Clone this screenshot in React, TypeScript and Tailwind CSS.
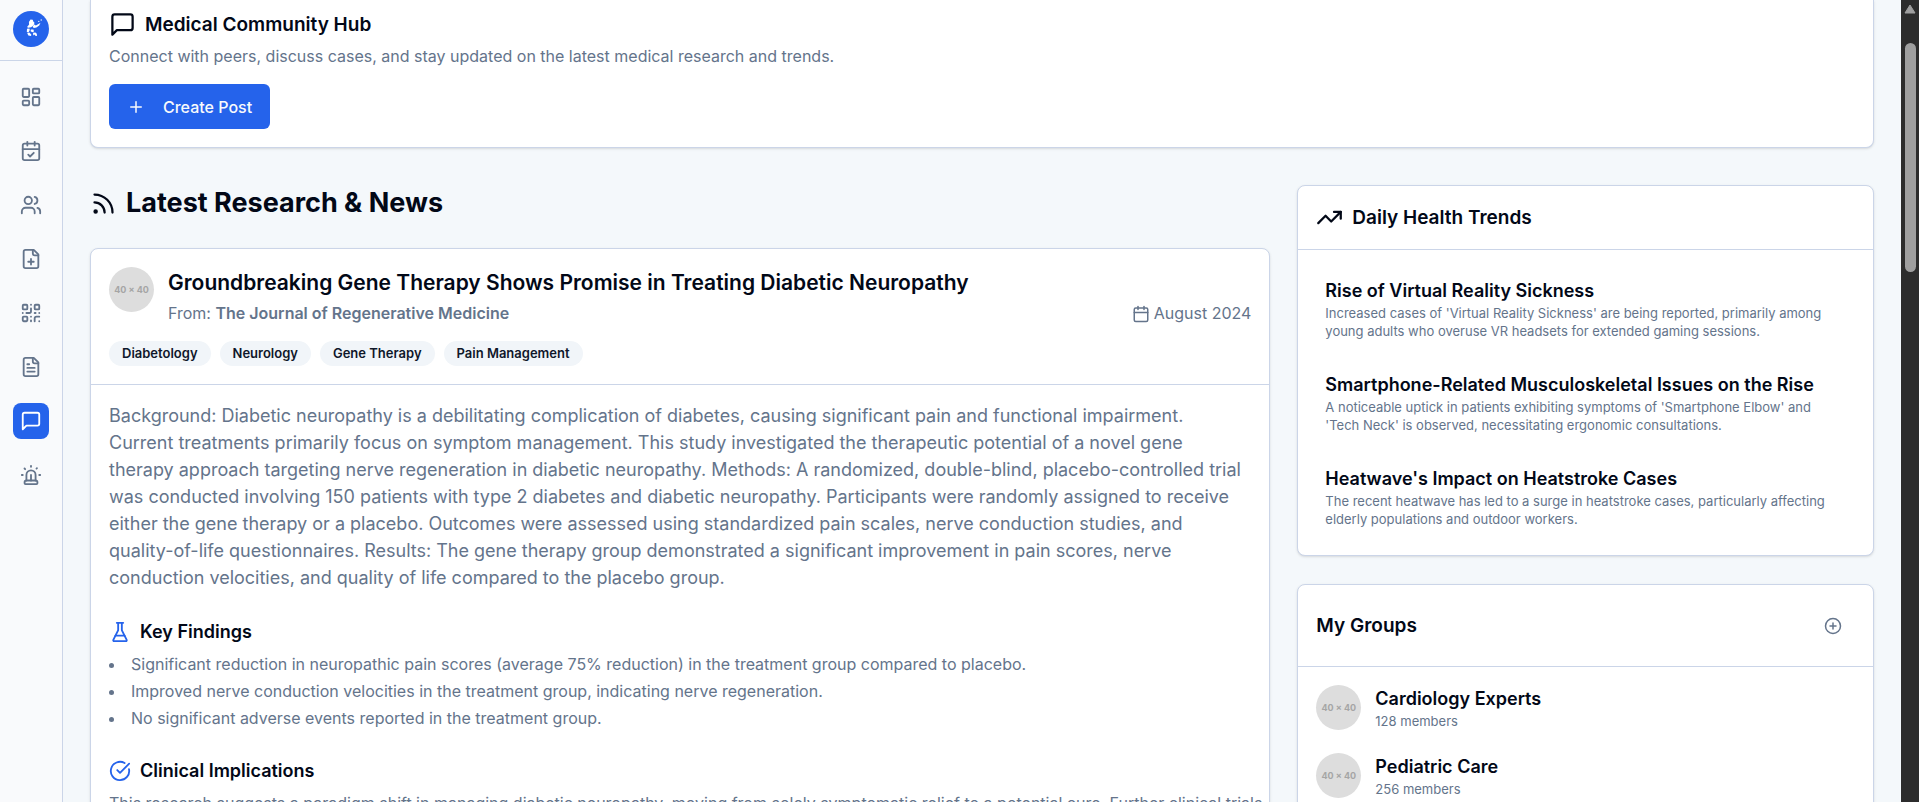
import type { ReactNode } from "react";
import {
  CalendarCheck,
  Calendar,
  CircleCheckBig,
  CirclePlus,
  LayoutDashboard,
  Plus,
  QrCode,
  Rss,
  Siren,
  TrendingUp,
  Users,
} from "lucide-react";

type IconProps = { className?: string };

function StrokeIcon({ className, children }: IconProps & { children: ReactNode }) {
  return (
    <svg
      viewBox="0 0 24 24"
      fill="none"
      stroke="currentColor"
      strokeWidth="2"
      strokeLinecap="round"
      strokeLinejoin="round"
      className={className}
      aria-hidden="true"
    >
      {children}
    </svg>
  );
}

function MessageIcon({ className }: IconProps) {
  return (
    <StrokeIcon className={className}>
      <path d="M21 15a2 2 0 0 1-2 2H7l-4 4V5a2 2 0 0 1 2-2h14a2 2 0 0 1 2 2z" />
    </StrokeIcon>
  );
}

function FilePlusIcon({ className }: IconProps) {
  return (
    <StrokeIcon className={className}>
      <path d="M15 2H6a2 2 0 0 0-2 2v16a2 2 0 0 0 2 2h12a2 2 0 0 0 2-2V7Z" />
      <path d="M14 2v4a2 2 0 0 0 2 2h4" />
      <path d="M9 15h6" />
      <path d="M12 18v-6" />
    </StrokeIcon>
  );
}

function FileTextIcon({ className }: IconProps) {
  return (
    <StrokeIcon className={className}>
      <path d="M15 2H6a2 2 0 0 0-2 2v16a2 2 0 0 0 2 2h12a2 2 0 0 0 2-2V7Z" />
      <path d="M14 2v4a2 2 0 0 0 2 2h4" />
      <path d="M10 9H8" />
      <path d="M16 13H8" />
      <path d="M16 17H8" />
    </StrokeIcon>
  );
}

function FlaskIcon({ className }: IconProps) {
  return (
    <StrokeIcon className={className}>
      <path d="M10 2v7.527a2 2 0 0 1-.211.896L4.720 20.550a1 1 0 0 0 .9 1.450h12.760a1 1 0 0 0 .9-1.450l-5.069-10.127A2 2 0 0 1 14 9.527V2" />
      <path d="M8.500 2h7" />
      <path d="M7 16h10" />
    </StrokeIcon>
  );
}

const navItems = [
  { label: "Dashboard", icon: LayoutDashboard },
  { label: "Appointments", icon: CalendarCheck },
  { label: "Patients", icon: Users },
  { label: "New record", icon: FilePlusIcon },
  { label: "Scan code", icon: QrCode },
  { label: "Reports", icon: FileTextIcon },
  { label: "Community", icon: MessageIcon, active: true },
  { label: "Emergency", icon: Siren },
];

const tags = ["Diabetology", "Neurology", "Gene Therapy", "Pain Management"];

const findings = [
  "Significant reduction in neuropathic pain scores (average 75% reduction) in the treatment group compared to placebo.",
  "Improved nerve conduction velocities in the treatment group, indicating nerve regeneration.",
  "No significant adverse events reported in the treatment group.",
];

const trends = [
  {
    title: "Rise of Virtual Reality Sickness",
    text: "Increased cases of 'Virtual Reality Sickness' are being reported, primarily among young adults who overuse VR headsets for extended gaming sessions.",
  },
  {
    title: "Smartphone-Related Musculoskeletal Issues on the Rise",
    text: "A noticeable uptick in patients exhibiting symptoms of 'Smartphone Elbow' and 'Tech Neck' is observed, necessitating ergonomic consultations.",
  },
  {
    title: "Heatwave's Impact on Heatstroke Cases",
    text: "The recent heatwave has led to a surge in heatstroke cases, particularly affecting elderly populations and outdoor workers.",
  },
];

const groups = [
  { name: "Cardiology Experts", members: "128 members" },
  { name: "Pediatric Care", members: "256 members" },
];

function Logo() {
  return (
    <svg viewBox="0 0 36 36" className="size-9" aria-hidden="true">
      <circle cx="18" cy="18" r="18" fill="#2563eb" />
      <g fill="#fff">
        <path d="M17.500 8.600l2.200 .2 .6 1.700 1.200 1.200-.8 2.600-2.600 2-3 .5-1-.9 2-2.400-.2-2.600z" />
        <path d="M21.200 13.600l1.700 .9 4.600-2.700-1.300 2.700-2.800 2-2.600 .4-1.200-1.200z" />
        <path d="M14 17.800l2.400-.2 .4 1.500-1.300 2.400-1.700-.6z" />
        <path d="M14.200 22.200l2.200-.6 2 2.200-.4 1.200-2.600-.4z" />
        <path d="M17.800 18.400l2.600 .2 .6 1.800-1.600 .8-1.800-1z" />
        <path d="M20 21.800l2.400-.4 1.400 1.400 .2 2.300-1.700-.3-.8-1.200-1.200 1z" />
        <circle cx="28.200" cy="9" r=".7" />
        <circle cx="25.800" cy="10.400" r=".6" />
      </g>
    </svg>
  );
}

function Avatar() {
  return (
    <span className="flex size-[45px] shrink-0 items-center justify-center rounded-full bg-[#dddddd] text-[9px] font-bold text-[#a5a5a5]">
      40 × 40
    </span>
  );
}

function Sidebar() {
  return (
    <aside className="w-[63px] shrink-0 border-r border-[#cbd5e8] bg-[#f9fafc]">
      <div className="flex h-[61px] items-center justify-center border-b border-[#cbd5e8] pb-[2px]">
        <a href="#home" aria-label="Home">
          <Logo />
        </a>
      </div>
      <nav className="flex flex-col items-center gap-[18px] pt-[18px]">
        {navItems.map(({ label, icon: Icon, active }) => (
          <a
            key={label}
            href="#nav"
            aria-label={label}
            className={
              active
                ? "flex size-9 items-center justify-center rounded-lg bg-[#2563eb] text-white"
                : "flex size-9 items-center justify-center rounded-lg text-[#64748b]"
            }
          >
            <Icon className="size-[22px]" />
          </a>
        ))}
      </nav>
    </aside>
  );
}

function HubCard() {
  return (
    <section className="rounded-b-lg border-x border-b border-[#cbd5e8] bg-white px-[18px] pt-[11px] pb-[18px] shadow-sm">
      <h1 className="flex items-center gap-[9px] text-[19px] leading-[27px] font-semibold">
        <MessageIcon className="size-[27px]" />
        Medical Community Hub
      </h1>
      <p className="mt-[7px] text-base leading-[23px] text-[#64748b]">
        Connect with peers, discuss cases, and stay updated on the latest medical research and trends.
      </p>
      <button className="mt-4 flex h-[45px] items-center gap-[18px] rounded-md bg-[#2563eb] px-[18px] text-base font-medium text-[#f8fafc]">
        <Plus className="size-[18px]" />
        Create Post
      </button>
    </section>
  );
}

function ArticleCard() {
  return (
    <article className="rounded-lg border border-[#cbd5e8] bg-white shadow-sm">
      <header className="border-b border-[#cbd5e8] p-[18px]">
        <div className="flex gap-[14px]">
          <Avatar />
          <div className="flex-1">
            <h3 className="text-[21px] leading-[31px] font-semibold">
              Groundbreaking Gene Therapy Shows Promise in Treating Diabetic Neuropathy
            </h3>
            <div className="mt-1 flex items-center justify-between text-base leading-[23px] text-[#64748b]">
              <p>
                From: <strong className="font-semibold">The Journal of Regenerative Medicine</strong>
              </p>
              <p className="flex items-center gap-1">
                <Calendar className="size-[18px]" />
                August 2024
              </p>
            </div>
          </div>
        </div>
        <ul className="mt-4 flex flex-wrap gap-[9px]">
          {tags.map((tag) => (
            <li
              key={tag}
              className="rounded-full bg-[#f1f5f9] px-[13px] py-[3px] text-[13px] leading-[19px] font-semibold text-[#0f172a]"
            >
              {tag}
            </li>
          ))}
        </ul>
      </header>
      <div className="px-[18px] pt-[17px] pb-[18px] text-[#64748b]">
        <p className="text-lg leading-[27px]">
          Background: Diabetic neuropathy is a debilitating complication of diabetes, causing significant pain and
          functional impairment. Current treatments primarily focus on symptom management. This study investigated the
          therapeutic potential of a novel gene therapy approach targeting nerve regeneration in diabetic neuropathy.
          Methods: A randomized, double-blind, placebo-controlled trial was conducted involving 150 patients with type 2
          diabetes and diabetic neuropathy. Participants were randomly assigned to receive either the gene therapy or a
          placebo. Outcomes were assessed using standardized pain scales, nerve conduction studies, and quality-of-life
          questionnaires. Results: The gene therapy group demonstrated a significant improvement in pain scores, nerve
          conduction velocities, and quality of life compared to the placebo group.
        </p>
        <h4 className="mt-[27px] flex items-center gap-[9px] text-lg leading-[27px] font-semibold text-[#020817]">
          <FlaskIcon className="size-[22px] text-[#2563eb]" />
          Key Findings
        </h4>
        <ul className="mt-2 list-inside list-disc space-y-1 text-base leading-[23px]">
          {findings.map((item) => (
            <li key={item}>{item}</li>
          ))}
        </ul>
        <h4 className="mt-[27px] flex items-center gap-[9px] text-lg leading-[27px] font-semibold text-[#020817]">
          <CircleCheckBig className="size-[22px] text-[#2563eb]" />
          Clinical Implications
        </h4>
        <p className="mt-2 text-base leading-[23px] whitespace-nowrap">
          This research suggests a paradigm shift in managing diabetic neuropathy, moving from solely symptomatic relief
          to a potential cure. Further clinical trials
        </p>
      </div>
    </article>
  );
}

function TrendsCard() {
  return (
    <section className="rounded-lg border border-[#cbd5e8] bg-white shadow-sm">
      <h3 className="flex items-center gap-[9px] border-b border-[#cbd5e8] p-[18px] text-[19px] leading-[27px] font-semibold">
        <TrendingUp className="size-[27px]" />
        Daily Health Trends
      </h3>
      <ul className="space-y-[13px] p-[18px]">
        {trends.map((trend) => (
          <li key={trend.title} className="p-[9px]">
            <h4 className="text-lg leading-[27px] font-semibold">{trend.title}</h4>
            <p className="text-[13px] leading-[18px] text-[#64748b]">{trend.text}</p>
          </li>
        ))}
      </ul>
    </section>
  );
}

function GroupsCard() {
  return (
    <section className="rounded-lg border border-[#cbd5e8] bg-white shadow-sm">
      <header className="flex items-center justify-between border-b border-[#cbd5e8] p-[18px]">
        <h3 className="text-[19px] leading-[27px] font-semibold">My Groups</h3>
        <button aria-label="Add group" className="flex size-[45px] items-center justify-center text-[#64748b]">
          <CirclePlus className="size-[18px]" />
        </button>
      </header>
      <ul className="space-y-[23px] p-[18px]">
        {groups.map((group) => (
          <li key={group.name} className="flex items-center gap-[14px]">
            <Avatar />
            <div>
              <h4 className="text-lg leading-[27px] font-semibold">{group.name}</h4>
              <p className="text-[13px] leading-[18px] text-[#64748b]">{group.members}</p>
            </div>
          </li>
        ))}
      </ul>
    </section>
  );
}

function ScrollTrack() {
  return (
    <div className="flex w-[18px] shrink-0 flex-col items-center bg-[#2c2c2c] pt-1" aria-hidden="true">
      <svg viewBox="0 0 12 10" className="h-[10px] w-3">
        <path d="M6 1l5 8H1z" fill="#9f9f9f" stroke="#9f9f9f" strokeLinejoin="round" />
      </svg>
      <span className="mt-[29px] h-[229px] w-[11px] rounded-full bg-[#9f9f9f]" />
    </div>
  );
}

export default function App() {
  return (
    <div className="flex h-screen overflow-hidden bg-[#f4f8fb] font-['Inter',sans-serif] text-[#020817]">
      <Sidebar />
      <main className="min-w-0 flex-1 overflow-hidden px-[27px]">
        <HubCard />
        <div className="mt-[37px] grid grid-cols-3 items-start gap-[27px]">
          <div className="col-span-2">
            <h2 className="mb-[27px] flex items-center gap-[9px] text-[27px] leading-9 font-bold">
              <Rss className="size-[27px]" />
              Latest Research &amp; News
            </h2>
            <ArticleCard />
          </div>
          <div className="space-y-7">
            <TrendsCard />
            <GroupsCard />
          </div>
        </div>
      </main>
      <ScrollTrack />
    </div>
  );
}
